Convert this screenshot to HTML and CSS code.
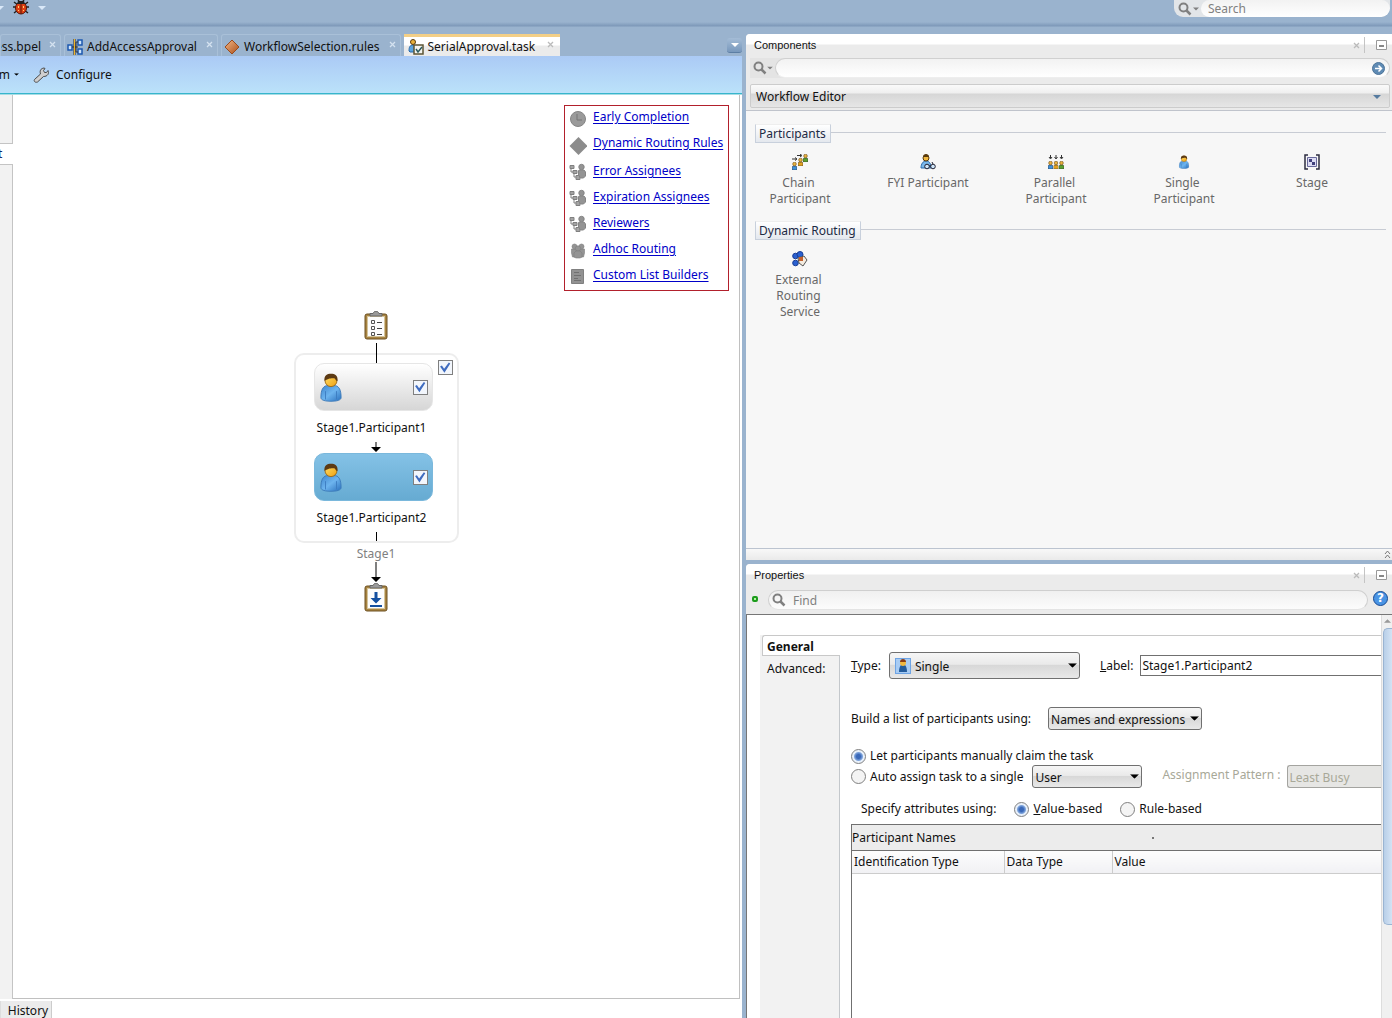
FILE: index.html
```html
<!DOCTYPE html>
<html lang="en">
<head>
<meta charset="utf-8">
<title>SerialApproval.task</title>
<link rel="stylesheet" href="styles.css">
</head>
<body>
<svg class="defs" width="0" height="0" aria-hidden="true">
  <defs>
    <linearGradient id="blueBody" x1="0" y1="0" x2="1" y2="1"><stop offset="0" stop-color="#3f86cf"/><stop offset=".5" stop-color="#6db4ee"/><stop offset="1" stop-color="#2a70bd"/></linearGradient>
    <linearGradient id="skin" x1="0" y1="0" x2="1" y2="1"><stop offset="0" stop-color="#ffe06a"/><stop offset="1" stop-color="#f0a010"/></linearGradient>
    <linearGradient id="orange" x1="0" y1="0" x2="1" y2="1"><stop offset="0" stop-color="#f4b888"/><stop offset="1" stop-color="#a84d18"/></linearGradient>
    <symbol id="person" viewBox="0 0 24 32">
      <path d="M1 27c0-8 2-12 6-13h10c4 1 6 5 6 13 0 3-5 4-11 4S1 30 1 27z" fill="url(#blueBody)" stroke="#3a78b8"/>
      <path d="M6 20v9M18 20v9" stroke="#3c7cc0" fill="none"/>
      <circle cx="12" cy="8.500" r="6.500" fill="url(#skin)" stroke="#a06a10"/>
      <path d="M5 9C4 3 8 1 12 1s8 2 7 8c-2 0-2-3-4-3-3 0-6 0-10 3z" fill="#5c3a14"/>
    </symbol>
    <symbol id="mini" viewBox="0 0 5 8">
      <path d="M0 8V5l1-1h3l1 1v3z" stroke="#333" stroke-width=".5"/><circle cx="2.500" cy="2" r="1.800" fill="#e9b23c" stroke="#6b4a12" stroke-width=".6"/>
    </symbol>
    <symbol id="lens" viewBox="0 0 14 14"><circle cx="5.500" cy="5.500" r="4" fill="none" stroke="#808080" stroke-width="2"/><path d="M8.500 8.500l4 4" stroke="#808080" stroke-width="2.500"/></symbol>
    <symbol id="down" viewBox="0 0 8 4"><path d="M0 0h8L4 4z"/></symbol>
    <symbol id="cross" viewBox="0 0 7 7"><path d="M1 1l5 5M6 1L1 6" fill="none" stroke="currentColor" stroke-width="1.300"/></symbol>
    <symbol id="assignees" viewBox="0 0 18 18">
      <path d="M1 2.500h4v3H1zM4 7.500h4v3H4zM7 12.500h4v4H7z" fill="#a4a4a4" stroke="#808080"/><path d="M2 6v3h2M5 11v3h2" fill="none" stroke="#808080"/>
      <circle cx="12.500" cy="4" r="2.700" fill="#949494" stroke="#858585"/><path d="M10 7h5l1.500 2v4l-2 2h-3l-2-3V8z" fill="#949494" stroke="#858585"/>
    </symbol>
    <symbol id="board" viewBox="0 0 24 30">
      <rect x="1" y="3" width="22" height="25" rx="2" fill="#a88442" stroke="#6c5020"/><rect x="3.500" y="5.500" width="17" height="20" fill="#fdfdfd" stroke="#d4c49c"/>
      <path d="M6 5V2.500h3c1-3 5-3 6 0h3V5z" fill="#9a9a9a" stroke="#666"/>
    </symbol>
  </defs>
</svg>

<header class="topbar">
  <svg class="arrow pale" width="8" height="4"><use href="#down"/></svg>
  <svg class="bug" width="16" height="16" viewBox="0 0 16 16"><path d="M1 3l4 3M15 3l-4 3M0 8h4M16 8h-4M1 14l4-3M15 14l-4-3M5 0l1 3M11 0l-1 3" stroke="#222" stroke-width="1.500" fill="none"/><ellipse cx="8" cy="9" rx="5.500" ry="6" fill="#e04012" stroke="#5a1404"/><path d="M5 2h6l1 3H4z" fill="#222"/><path d="M8 5v10" stroke="#5a1404"/><path d="M5 7h1v2H5zM10 7h1v2h-1zM5 11h1v1H5zM10 11h1v1h-1z" fill="#ffd070"/></svg>
  <svg class="arrow pale" width="8" height="4"><use href="#down"/></svg>
  <label class="search"><svg width="14" height="14"><use href="#lens"/></svg><svg class="arrow grey" width="6" height="4"><use href="#down"/></svg><input type="search" placeholder="Search" aria-label="Search"></label>
</header>

<main class="workspace">
  <section class="editor">
    <nav class="tabs">
      <a class="tab tab-cut" href="#bpel"><span>ess.bpel</span><svg class="x" width="7" height="7"><use href="#cross"/></svg></a>
      <a class="tab" href="#approval"><svg width="16" height="16" viewBox="0 0 16 16"><path d="M1 6h4v5H1zM11 1h4v5h-4zM11 10h4v5h-4z" fill="#cfe4fb" stroke="#1c58b0" stroke-width="1.500"/><path d="M5 8h6M11 3H9v10h2" stroke="#333" fill="none"/><path d="M7.500 0v16" stroke="#2a2a2a" stroke-width="2"/><path d="M7.500 0v16" stroke="#f0b428"/></svg><span>AddAccessApproval</span><svg class="x" width="7" height="7"><use href="#cross"/></svg></a>
      <a class="tab" href="#rules"><svg width="16" height="16" viewBox="0 0 16 16"><path d="M8 1l7 7-7 7-7-7z" fill="url(#orange)" stroke="#9a4a1c"/></svg><span>WorkflowSelection.rules</span><svg class="x" width="7" height="7"><use href="#cross"/></svg></a>
      <a class="tab tab-on" href="#task"><svg width="16" height="16" viewBox="0 0 16 16"><path d="M1 12c0-4 1-6 4-6s4 2 4 7H2z" fill="#5aa4e0" stroke="#2a68a8"/><circle cx="5" cy="3" r="2.500" fill="#e9b23c" stroke="#5a3a0c"/><rect x="6" y="6" width="9" height="9" fill="#f4f4f0" stroke="#5e5636" stroke-width="1.500"/><path d="M8 10l2 3 4-5" fill="none" stroke="#2b5a5e" stroke-width="1.500"/></svg><span>SerialApproval.task</span><svg class="x" width="7" height="7"><use href="#cross"/></svg></a>
      <button class="tab-menu" aria-label="Open files"><svg class="arrow" width="8" height="4"><use href="#down"/></svg></button>
    </nav>
    <div class="toolbar">
      <button class="tool tool-cut"><span>m</span><svg width="5" height="3" viewBox="0 0 8 4"><use href="#down"/></svg></button>
      <button class="tool"><svg width="16" height="16" viewBox="0 0 16 16"><path d="M1.500 12.500l6-5.500c-1-3 0-5.500 3.500-6l1 .500-1.500 2 1 2 2 0 1.500-2c1.500 3-.500 6-4.500 6l-6 5.500c-2.500 1-4-1-3-2.500z" fill="#cfcfcf" stroke="#4a4a4a"/></svg><span>Configure</span></button>
    </div>
    <div class="design">
      <aside class="gutter"><div class="gutter-top"></div><button class="side-tab"><span>t</span></button><div class="gutter-rest"></div></aside>
      <div class="canvas">
        <ul class="links">
          <li><svg width="18" height="18" viewBox="0 0 18 18"><circle cx="9" cy="9" r="7.500" fill="#9a9a9a" stroke="#858585"/><path d="M8 4v6h5" fill="none" stroke="#747474"/></svg><a href="#early">Early Completion</a></li>
          <li class="wide"><svg width="18" height="18" viewBox="0 0 18 18"><path d="M9.500 0l9 9-9 9-9-9z" fill="#8c8c8c"/></svg><a href="#dynamic">Dynamic Routing Rules</a></li>
          <li><svg width="18" height="18"><use href="#assignees"/></svg><a href="#error">Error Assignees</a></li>
          <li><svg width="18" height="18"><use href="#assignees"/></svg><a href="#expiration">Expiration Assignees</a></li>
          <li><svg width="18" height="18"><use href="#assignees"/></svg><a href="#reviewers">Reviewers</a></li>
          <li><svg width="18" height="18" viewBox="0 0 18 18"><g fill="#949494" stroke="#7e7e7e" stroke-width=".6"><path d="M2.500 8h13v4l-1 4h-11l-1-4z"/><circle cx="5.500" cy="5.500" r="2.500"/><circle cx="12.500" cy="5.500" r="2.500"/><circle cx="9" cy="7.500" r="2.700"/><path d="M5 12l2-2h4l2 2v4l-2 1H7l-2-1z"/></g></svg><a href="#adhoc">Adhoc Routing</a></li>
          <li><svg width="18" height="18" viewBox="0 0 18 18"><path d="M2.500 2.500h12v14h-12z" fill="#929292" stroke="#808080"/><path d="M5 5.500h5M5 8.500h7M5 11.500h4M5 13.500h7" stroke="#707070"/></svg><a href="#builders">Custom List Builders</a></li>
        </ul>
        <div class="flow">
          <svg width="24" height="30" viewBox="0 0 24 30"><use href="#board"/><path d="M7.500 9.500h3v3h-3zM7.500 15.500h3v3h-3zM7.500 21.500h3v3h-3z" fill="none" stroke="#555"/><path d="M13 11.500h5M13 17.500h5M13 23.500h5" stroke="#444"/></svg>
          <div class="line line-in"></div>
          <div class="stage">
            <input class="check stage-check" type="checkbox" checked aria-label="Stage1">
            <div class="node"><svg width="22" height="31"><use href="#person"/></svg><input class="check" id="p1" type="checkbox" checked></div>
            <label for="p1">Stage1.Participant1</label>
            <svg class="link-arrow" width="10" height="10" viewBox="0 0 10 10"><path d="M4.500 0h1v5H10L5 10 0 5h4.500z"/></svg>
            <div class="node node-on"><svg width="22" height="31"><use href="#person"/></svg><input class="check" id="p2" type="checkbox" checked></div>
            <label for="p2">Stage1.Participant2</label>
            <div class="line line-out"></div>
          </div>
          <span class="stage-name">Stage1</span>
          <svg width="10" height="21" viewBox="0 0 10 21"><path d="M4.500 0h1v15H10L5 20 0 15h4.500z"/></svg>
          <svg width="24" height="30" viewBox="0 0 24 30"><use href="#board"/><path d="M10.500 9h3v6h4L12 20.500 6.500 15h4z" fill="#1450a0"/><path d="M6 23h12" stroke="#1450a0" stroke-width="2"/></svg>
        </div>
      </div>
    </div>
    <footer class="views"><button class="view">History</button></footer>
  </section>

  <div class="docks">
    <section class="dock components">
      <header class="dock-head"><h2>Components</h2><svg class="x" width="7" height="7"><use href="#cross"/></svg><i class="bar"></i><svg width="11" height="10" viewBox="0 0 11 10"><path d="M.5.500h10v9H.5z" fill="#fff" stroke="#999"/><path d="M3 6h5" stroke="#888" stroke-width="2"/></svg></header>
      <label class="filter"><svg width="14" height="14"><use href="#lens"/></svg><svg class="arrow grey" width="6" height="4" viewBox="0 0 8 4"><use href="#down"/></svg><input type="text" aria-label="Filter components"><svg class="go" width="13" height="13" viewBox="0 0 13 13"><circle cx="6.500" cy="6.500" r="6" fill="#5f8bb4" stroke="#4c7398"/><path d="M3 6.500h6M6.500 3.500l3 3-3 3" fill="none" stroke="#fff" stroke-width="1.500"/></svg></label>
      <button class="page"><span>Workflow Editor</span><svg width="8" height="4"><use href="#down"/></svg></button>
      <div class="palette">
        <section>
          <h3><span>Participants</span></h3>
          <ul class="items">
            <li><svg width="16" height="16" viewBox="0 0 16 16"><use href="#mini" x="0" y="8" width="5" height="8" fill="#3f8fd8"/><use href="#mini" x="6" y="4" width="5" height="8" fill="#e0a020"/><use href="#mini" x="11" y="0" width="5" height="8" fill="#58a030"/><path d="M0 5h4M3 3.500L5 5 3 6.500M5 1.500h4M8 0l2 1.500L8 3" fill="none" stroke="#333"/></svg>Chain&nbsp;<br>Participant</li>
            <li><svg width="16" height="16" viewBox="0 0 16 16"><path d="M1 14c0-4 2-7 5-7s5 2 5 7z" fill="#7ab8ec" stroke="#2c6cac"/><circle cx="6" cy="4" r="3" fill="#f0b840" stroke="#5a3a0c"/><path d="M3 3c0-4 6-4 6 0z" fill="#5a3a0c"/><circle cx="7" cy="12.500" r="2.300" fill="#cfe6fa" stroke="#223"/><circle cx="13" cy="12.500" r="2.300" fill="#cfe6fa" stroke="#223"/><path d="M9 12h2M13 10l-1-2" stroke="#223"/></svg>FYI Participant</li>
            <li><svg width="16" height="16" viewBox="0 0 16 16"><use href="#mini" x="0" y="7" width="5" height="8" fill="#3f8fd8"/><use href="#mini" x="5.500" y="7" width="5" height="8" fill="#e0a020"/><use href="#mini" x="11" y="7" width="5" height="8" fill="#58a030"/><path d="M2.500 1v3M8 1v3M13.500 1v3M1 3l1.500 2L4 3M6.500 3L8 5l1.500-2M12 3l1.500 2L15 3" fill="none" stroke="#333"/></svg>Parallel&nbsp;<br>Participant</li>
            <li><svg width="16" height="14" viewBox="0 0 24 32"><use href="#person"/></svg>Single&nbsp;<br>Participant</li>
            <li><svg width="16" height="16" viewBox="0 0 16 16"><path d="M4 1H1v14h3M12 1h3v14h-3" fill="none" stroke="#2c2c40" stroke-width="1.500"/><path d="M3.500 3.500h9v9h-9z" fill="#dcdcf4" stroke="#6a6a9c"/><path d="M5 5h3v3H5zM8 8h3v3H8z" fill="#40407c"/></svg>Stage</li>
          </ul>
        </section>
        <section>
          <h3><span>Dynamic Routing</span></h3>
          <ul class="items">
            <li><svg width="16" height="16" viewBox="0 0 16 16"><g fill="#2a60d0" stroke="#183c94"><circle cx="3.500" cy="5" r="2.800"/><circle cx="3.500" cy="12" r="2.800"/><circle cx="8" cy="3.500" r="3"/></g><path d="M6 7l6-2 3 4-4 6-4-3z" fill="#f4ece0" stroke="#555"/><path d="M7 6h4v4H7z" fill="#c4602c"/></svg>External&nbsp;<br>Routing&nbsp;<br>Service</li>
          </ul>
        </section>
      </div>
      <div class="grip"><svg width="7" height="9" viewBox="0 0 7 9"><path d="M1 4l2.500-3L6 4M1 8l2.500-3L6 8" fill="none" stroke="#777"/></svg></div>
    </section>

    <section class="dock properties">
      <header class="dock-head"><h2>Properties</h2><svg class="x" width="7" height="7"><use href="#cross"/></svg><i class="bar"></i><svg width="11" height="10" viewBox="0 0 11 10"><path d="M.5.500h10v9H.5z" fill="#fff" stroke="#999"/><path d="M3 6h5" stroke="#888" stroke-width="2"/></svg></header>
      <div class="find-row">
        <i class="dot"></i>
        <label class="find"><svg width="14" height="14"><use href="#lens"/></svg><input type="text" placeholder="Find" aria-label="Find"></label>
        <button class="help" aria-label="Help">?</button>
      </div>
      <div class="sheet">
        <div class="sheet-body">
          <nav class="cats"><a class="on" href="#general">General</a><a href="#advanced">Advanced:</a></nav>
          <form class="form">
            <div class="row row-type">
              <label for="type"><u>T</u>ype:</label>
              <span class="drop drop-type"><svg class="drop-icon" width="16" height="16" viewBox="0 0 16 16"><path d="M0 0h16v16H0z" fill="#6ea4e4"/><path d="M1 1h14v14H1z" fill="#a8ccf4"/><path d="M4 14c0-4 1-6 2-7h4c1 1 2 3 2 7z" fill="#245c9c"/><circle cx="8" cy="5" r="3" fill="#f0b840"/><path d="M5 4c0-4 6-4 6 0z" fill="#8c3c14"/></svg><select id="type"><option>Single</option></select><svg class="caret" width="9" height="5" viewBox="0 0 8 4"><use href="#down"/></svg></span>
              <label class="label-label" for="name"><u>L</u>abel:</label>
              <input class="name" id="name" type="text" value="Stage1.Participant2">
            </div>
            <div class="row row-build">
              <label for="build">Build a list of participants using:</label>
              <span class="drop drop-build"><select id="build"><option>Names and expressions</option></select><svg class="caret" width="9" height="5" viewBox="0 0 8 4"><use href="#down"/></svg></span>
            </div>
            <div class="row row-claim"><input type="radio" name="claim" id="manual" checked><label for="manual">Let participants manually claim the task</label></div>
            <div class="row row-auto">
              <input type="radio" name="claim" id="auto"><label for="auto">Auto assign task to a single</label>
              <span class="drop drop-user"><select aria-label="Assignee kind"><option>User</option></select><svg class="caret" width="9" height="5" viewBox="0 0 8 4"><use href="#down"/></svg></span>
              <label class="off" for="pattern">Assignment Pattern :</label>
              <span class="drop drop-pattern"><select id="pattern" disabled><option>Least Busy</option></select></span>
            </div>
            <div class="row row-attr"><span class="attr-text">Specify attributes using:</span><input type="radio" name="attr" id="value" checked><label for="value"><u>V</u>alue-based</label><input class="second" type="radio" name="attr" id="rule"><label for="rule">Rule-based</label></div>
            <div class="names">
              <div class="names-head"><span>Participant Names</span><i></i></div>
              <table><thead><tr><th class="c1">Identification Type</th><th class="c2">Data Type</th><th>Value</th></tr></thead></table>
            </div>
          </form>
        </div>
        <div class="scroll"><svg width="7" height="4" viewBox="0 0 8 4"><path d="M0 4h8L4 0z" fill="#999"/></svg><div class="thumb"></div></div>
      </div>
    </section>
  </div>
</main>
</body>
</html>
```
FILE: styles.css
```css
* { box-sizing: border-box; }
body { margin: 0; height: 100vh; display: flex; flex-direction: column; overflow: hidden; background: #9ab3ce; color: #111; font: 12px/16px "Noto Sans", Tahoma, sans-serif; }
ul { list-style: none; margin: 0; padding: 0; }
h2, h3 { margin: 0; font-weight: normal; }
button, input, select { font: inherit; color: inherit; }
button { border: 0; padding: 0; background: none; }
svg { display: block; flex: none; }
.defs { position: absolute; }
a { color: inherit; text-decoration: none; }

.topbar { flex: none; height: 27px; display: flex; align-items: flex-start; gap: 9px; background: linear-gradient(#9ab3ce 22px, #7d98b8 26px, #9ab3ce); }
.topbar .pale { fill: #d9e8f8; margin-top: 6px; }
.topbar > .pale:first-child { margin-left: -4px; }
.bug { margin-top: -1px; }
.grey { fill: #808080; }
.search { margin: 0 2px 0 auto; width: 216px; height: 17px; display: flex; align-items: center; gap: 1px; padding-left: 4px; border-radius: 0 0 9px 9px; background: #e2e5e8; overflow: hidden; }
.search input { flex: 1; min-width: 0; height: 17px; margin-left: 1px; padding: 0 7px; border: 0; border-radius: 9px; background: linear-gradient(#f2f2f2, #fff); }
input::placeholder { color: #808080; opacity: 1; }

.workspace { flex: 1; min-height: 0; display: grid; grid-template-columns: minmax(0, 742fr) minmax(0, 646fr); gap: 4px; }
.editor { display: flex; flex-direction: column; min-height: 0; }
.tabs { flex: none; height: 29px; display: flex; align-items: flex-end; gap: 3px; }
.tab { height: 22px; display: flex; align-items: center; gap: 4px; padding: 2px 4px 0 2px; border: 1px solid #a9c0d8; border-bottom: 0; border-radius: 3px 3px 0 0; white-space: nowrap; }
.tab .x { color: #d4e2f0; margin: -4px 0 0 5px; }
.tab-cut { width: 61px; justify-content: flex-end; overflow: hidden; }
.tab.tab-cut .x { margin-left: 4px; }
.tab-on { border: 0; border-top: 3px solid #f3cf87; border-radius: 0; padding: 0 6px 0 4px; background: linear-gradient(#fff 8px, #ebebeb 9px); }
.tab-on .x { color: #bbb; margin-left: 8px; }
.tab-menu { width: 15px; height: 15px; margin: 0 0 3px auto; display: grid; place-items: center; border-radius: 3px; border-bottom: 1px solid #5c7ea4; background: linear-gradient(#a4bcd6, #7898bc); fill: #fff; }
.toolbar { flex: none; height: 38px; display: flex; align-items: center; gap: 14px; border-bottom: 1px solid #37b6cc; background: linear-gradient(#abcaf5, #bbe2fa); }
.tool { display: flex; align-items: center; gap: 7px; }
.tool-cut { width: 19px; gap: 4px; justify-content: flex-end; }
.design { flex: 1; min-height: 0; display: flex; border-top: 1px solid #a8dce4; background: #fff; }
.gutter { width: 13px; display: flex; flex-direction: column; }
.gutter-top, .gutter-rest { background: #f2f2f2; border-right: 1px solid #c4c4c4; }
.gutter-top { height: 49px; border-bottom: 1px solid #c4c4c4; }
.gutter-rest { flex: 1; border-top: 1px solid #c4c4c4; }
.side-tab { height: 20px; text-align: left; color: #0a2a6a; overflow: hidden; }
.side-tab span { margin-left: -2px; }
.canvas { flex: 1; position: relative; margin-right: 2px; border: solid #c0c0c0; border-width: 0 1px 1px 0; }
.links { position: absolute; top: 10px; right: 10px; width: 165px; padding: 3px 4px 2px; border: 1px solid #b2202c; }
.links li { height: 26px; display: flex; gap: 6px; }
.links .wide { height: 28px; }
.links li:last-child { height: 21px; }
.links li:first-child svg { margin-top: 1px; }
.links .wide svg { margin-top: 2px; }
.links a { height: 16px; color: #0000c8; text-decoration: underline; white-space: nowrap; text-underline-offset: 2px; }
.flow { display: flex; flex-direction: column; align-items: center; padding-top: 216px; }
.line { width: 1px; background: #000; }
.line-in { height: 20px; margin: 2px 0 -10px; z-index: 1; }
.stage { position: relative; width: 165px; height: 190px; display: flex; flex-direction: column; align-items: center; padding: 8px 0 0; border: 2px solid #ededed; border-radius: 10px; background: #fff; }
.stage-check { position: absolute; top: 5px; right: 4px; }
.node { width: 119px; height: 49px; display: flex; align-items: center; justify-content: space-between; margin-right: 6px; padding: 0 4px 0 5px; border-radius: 10px; border: 1px solid #e6e6e6; background: linear-gradient(#fff, #d6d6d6); }
.node-on { border-color: #7ab8dc; background: linear-gradient(#84c2e6, #66abd2); }
.node + label { margin: 9px 9px 0 0; }
.link-arrow { margin: 6px 0 1px; }
.line-out { height: 9px; margin-top: 6px; }
.stage-name { margin-top: 3px; color: #808080; }
.check { appearance: none; width: 15px; height: 15px; margin: 0; border: 1px solid #7f7f7f; background: #f2f6fc; display: grid; place-items: center; }
.check::before { content: ""; width: 11px; height: 11px; background: #3f6cc0; clip-path: polygon(5% 40%, 22% 32%, 42% 62%, 85% 5%, 98% 14%, 45% 98%); }
.views { flex: none; height: 19px; padding-top: 2px; background: #fff; }
.view { width: 52px; height: 17px; display: block; background: #ebebeb; border-right: 1px solid #ccc; border-left: 1px solid #ddd; padding: 2px 0 0 4px; }

.docks { display: flex; flex-direction: column; gap: 4px; min-height: 0; padding-top: 7px; }
.dock { display: flex; flex-direction: column; min-height: 0; background: #ebebeb; border-radius: 4px 0 0 0; overflow: hidden; }
.components { flex: 526; }
.properties { flex: 454; }
.dock-head { flex: none; height: 24px; display: flex; align-items: center; gap: 4px; padding: 0 5px 2px 8px; background: linear-gradient(#fff 10px, #ebebeb 11px); }
.dock-head h2 { font: 11px/16px "Liberation Sans", Arial, sans-serif; flex: 1; }
.dock-head .x { color: #bbb; }
.bar { width: 1px; height: 16px; background: #c4c4c4; margin-right: 7px; }
.filter { flex: none; height: 20px; display: flex; align-items: center; margin: 0 2px 0 4px; padding-left: 3px; background: #e4e4e4; border-radius: 0 10px 10px 0; position: relative; }
.filter input { flex: 1; min-width: 0; height: 20px; margin-left: 2px; border: 1px solid #d0d0d0; border-bottom-color: #eee; border-radius: 10px; background: linear-gradient(#f2f2f2, #fff); }
.go { position: absolute; right: 5px; top: 4px; }
.page { flex: none; height: 24px; display: flex; align-items: center; justify-content: space-between; margin: 6px 2px 2px 4px; padding: 1px 8px 0 5px; border: 1px solid #ccc; border-radius: 2px; background: linear-gradient(#fafafa, #efefef 8px, #d6d6d6 9px, #e6e6e6); }
.page svg { fill: #557a9f; }
.palette { flex: 1; min-height: 0; border-top: 1px solid #c0c4cc; background: #f7f7f7; padding: 13px 6px 0 9px; color: #686868; }
.palette h3 { display: flex; height: 19px; color: #1c2a44; font: inherit; }
.palette h3 span { padding: 0 4px 0 3px; border: 1px solid #c8d0dc; border-top-color: #eee; background: linear-gradient(#fff, #e4e8ee); line-height: 18px; }
.palette h3::after { content: ""; flex: 1; height: 8px; border-bottom: 1px solid #c8ccd4; }
.items { display: flex; gap: 40px; padding: 11px 0 14px 1px; }
.items li { width: 88px; text-align: center; white-space: nowrap; }
.items svg { margin: 0 auto 5px; }
.items svg[height="14"] { margin: 1px auto 6px; }
.grip { flex: none; height: 12px; border-top: 1px solid #bcc4d0; background: linear-gradient(#f8f8f8, #eaeaea); display: flex; justify-content: flex-end; padding: 1px 1px 0; }

.find-row { flex: none; height: 26px; display: flex; align-items: flex-start; padding: 2px 4px 0 6px; }
.dot { width: 6px; height: 6px; margin-top: 6px; border: 2px solid #1c9c1c; border-radius: 2px; background: #b4f0a4; }
.find { flex: 1; height: 20px; display: flex; align-items: center; gap: 6px; margin: 0 5px 0 10px; padding-left: 3px; border: 1px solid #cfcfcf; border-bottom-color: #e4e4e4; border-radius: 10px; background: linear-gradient(#f0f0f0, #fcfcfc); }
.find input { flex: 1; min-width: 0; border: 0; padding: 1px 0 0; background: none; margin-left: 1px; }
.help { width: 15px; height: 15px; margin-top: 1px; border-radius: 50%; border: 1px solid #174a94; background: #4a94e4; color: #fff; font: bold 12px/13px "DejaVu Sans", sans-serif; }
.sheet { flex: 1; min-height: 0; display: flex; border: solid #767676; border-width: 1px 0 0 1px; background: #fff; }
.sheet-body { flex: 1; min-width: 0; display: flex; margin: 20px 0 0 13px; overflow: hidden; }
.cats { flex: none; width: 80px; display: flex; flex-direction: column; background: #f2f2f2; border-right: 1px solid #c4c8cc; }
.cats a { padding: 5px 0 0 7px; }
.cats .on { height: 21px; margin: 0 -1px 0 2px; padding: 3px 0 0 4px; border: 1px solid #c8c8c8; border-right: 0; border-radius: 3px 0 0 0; background: #fff; font-weight: bold; }
.form { flex: 1; min-width: 0; display: flex; flex-direction: column; border-top: 1px solid #c8c8c8; padding-left: 11px; white-space: nowrap; }
.row { flex: none; display: flex; align-items: center; }
.row-type { margin-top: 16px; height: 27px; }
.row-type label { padding-top: 1px; }
.drop { position: relative; display: block; flex: none; }
select { appearance: none; width: 100%; height: 100%; padding: 2px 2px 0; border: 1px solid #707070; border-radius: 3px; background: linear-gradient(#f6f6f6, #eaeaea 45%, #d8d8d8 50%, #e8e8e8); display: block; }
.caret { position: absolute; right: 3px; top: 50%; margin-top: -3px; }
.drop-icon { position: absolute; left: 6px; top: 6px; }
.drop-type { width: 191px; height: 27px; margin-left: 8px; }
.drop-type select { padding-left: 25px; }
.label-label { margin-left: 20px; }
.name { flex: 1; min-width: 0; height: 21px; margin-left: 7px; padding: 0 1px; border: 1px solid #707070; border-right: 0; background: #fff; }
.row-build { margin-top: 28px; height: 23px; }
.drop-build { width: 154px; height: 23px; margin-left: 17px; }
.row-claim { margin-top: 18px; height: 16px; }
.row-auto { height: 23px; margin-top: 1px; }
input[type=radio] { appearance: none; flex: none; width: 15px; height: 15px; margin: 0 4px 0 0; border: 1px solid #808080; border-radius: 50%; background: #f4f4f4; }
input[type=radio]:checked { background: radial-gradient(circle, #3a68b8 2px, #7ea4dc 4px, #e8f0fa 5px); }
.drop-user { width: 110px; height: 23px; margin-left: 9px; }
.off { margin-left: 20px; padding-bottom: 4px; color: #a8a898; }
.drop-pattern { flex: 1; height: 23px; margin-left: 6px; }
.drop-pattern select { border-right: 0; border-radius: 3px 0 0 3px; border-color: #a4a4a0; background: #e6e6e4; color: #a8a898; opacity: 1; }
.row-attr { margin: 13px 0 7px; height: 16px; padding-left: 10px; }
.attr-text { margin-right: 18px; }
.row-attr .second { margin-left: 18px; }
.names { flex: 1; border: solid #707070; border-width: 1px 0 0 1px; }
.names-head { height: 26px; display: flex; align-items: center; background: #ececec; border-bottom: 1px solid #707070; }
.names-head i { width: 2px; height: 2px; background: #777; margin-left: 196px; }
table { width: 100%; border-collapse: collapse; table-layout: fixed; }
th { height: 22px; padding: 1px 2px 0; text-align: left; font-weight: normal; background: linear-gradient(#fdfdfd, #f1f1f4); border: solid #ccc; border-width: 0 0 1px 1px; }
th:first-child { border-left: 0; }
.c1 { width: 152px; }
.c2 { width: 108px; }
.scroll { flex: none; width: 11px; border-left: 1px solid #ddd; background: #f0f0f0; display: flex; flex-direction: column; align-items: center; padding: 4px 0 0 1px; gap: 5px; }
.thumb { width: 9px; height: 297px; border: 1px solid #9ab4d2; border-right: 0; border-radius: 5px 0 0 5px; background: linear-gradient(90deg, #b8cfe8, #d4e3f4); }
```
